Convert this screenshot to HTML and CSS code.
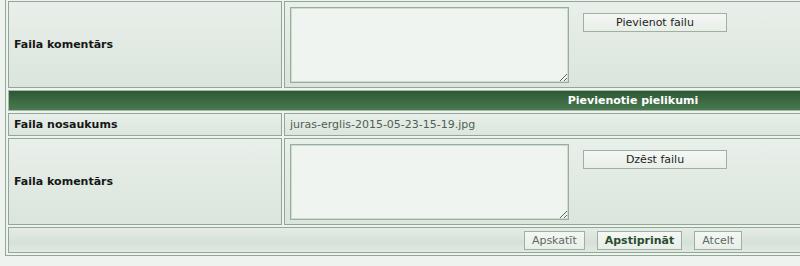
FILE: index.html
```html
<!DOCTYPE html>
<html lang="lv">
<head>
    <meta charset="UTF-8">
    <title>Pielikumi</title>
    <link rel="stylesheet" href="styles.css">
</head>
<body>

    <form class="attach-form" action="#" method="POST">
        <table class="form-table">
            <!-- Jauns pielikums -->
            <tr class="row-comment">
                <td class="label">Faila komentārs</td>
                <td class="value">
                    <div class="field-line">
                        <textarea name="new_comment"></textarea>
                        <button type="button" class="btn btn-wide">Pievienot failu</button>
                    </div>
                </td>
            </tr>

            <tr class="row-head">
                <td colspan="2">Pievienotie pielikumi</td>
            </tr>

            <tr class="row-name">
                <td class="label">Faila nosaukums</td>
                <td class="value file-name">juras-erglis-2015-05-23-15-19.jpg</td>
            </tr>

            <tr class="row-comment">
                <td class="label">Faila komentārs</td>
                <td class="value">
                    <div class="field-line">
                        <textarea name="comment_1"></textarea>
                        <button type="button" class="btn btn-wide">Dzēst failu</button>
                    </div>
                </td>
            </tr>

            <!-- Pogas -->
            <tr class="row-foot">
                <td colspan="2">
                    <div class="actions">
                        <button type="button" class="btn">Apskatīt</button>
                        <button type="submit" class="btn btn-main">Apstiprināt</button>
                        <button type="button" class="btn">Atcelt</button>
                    </div>
                </td>
            </tr>
        </table>
    </form>

</body>
</html>
```

FILE: styles.css
```css
* {
    box-sizing: border-box;
}

html, body {
    margin: 0;
    padding: 0;
    overflow: hidden;
}

body {
    background-color: #eef3ef;
    font-family: "DejaVu Sans", Verdana, sans-serif;
    font-size: 11px;
    color: #151815;
}

.attach-form {
    padding-left: 5px;
    margin-top: -2px;
}

.form-table {
    width: 1256px;
    border: 1px solid #93a796;
    border-spacing: 2px;
}

.form-table td {
    border: 1px solid #93a796;
    padding: 0 5px;
    background: linear-gradient(#e9efea, #dbe4dd);
    vertical-align: middle;
}

.form-table td.label {
    width: 274px;
    font-weight: bold;
    padding-left: 5px;
}

.row-comment td {
    height: 87px;
}

.row-comment td.value {
    vertical-align: top;
    padding-top: 5px;
}

.field-line {
    display: flex;
    align-items: flex-start;
    gap: 14px;
}

textarea {
    width: 279px;
    height: 76px;
    border: 1px solid #98ad9c;
    box-shadow: inset 0 0 0 1px #cfdad0;
    background-color: #f0f4f0;
    font-family: inherit;
    font-size: 11px;
    margin: 0;
}

.row-head td {
    height: 21px;
    padding: 0;
    border-color: #a6b8a9;
    background: linear-gradient(#2d5834, #4a7a51);
    color: #ffffff;
    font-weight: bold;
    text-align: center;
}

.row-name td {
    height: 23px;
}

.file-name {
    color: #4f5f52;
}

.row-foot td {
    height: 26px;
    padding: 0;
    background: linear-gradient(#e6ece7, #d6e0d8 60%, #e2e9e3);
}

.actions {
    display: flex;
    justify-content: center;
    gap: 12px;
}

.btn {
    height: 19px;
    padding: 0 7px;
    border: 1px solid #9db1a1;
    background: linear-gradient(#f4f7f4, #e9eee9);
    font-family: inherit;
    font-size: 11px;
    color: #5b6b5e;
    cursor: pointer;
}

.btn-wide {
    width: 144px;
    margin-top: 6px;
    color: #1c1f1c;
}

.btn-main {
    font-weight: bold;
    color: #2a4d30;
}
```
